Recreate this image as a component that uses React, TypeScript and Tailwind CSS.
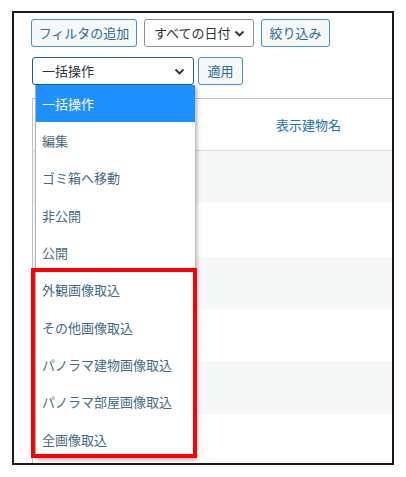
import React from "react";

const items = [
  "一括操作",
  "編集",
  "ゴミ箱へ移動",
  "非公開",
  "公開",
  "外観画像取込",
  "その他画像取込",
  "パノラマ建物画像取込",
  "パノラマ部屋画像取込",
  "全画像取込",
];

const Chevron = ({ className = "" }: { className?: string }) => (
  <svg width="11" height="7" viewBox="0 0 11 7" className={className}>
    <path d="M1.5 1.5 L5.5 5.5 L9.5 1.5" fill="none" stroke="#2c3338" strokeWidth="1.8" />
  </svg>
);

export default function App() {
  const font = { fontFamily: '"Noto Sans CJK JP", "Noto Sans", sans-serif' };
  return (
    <div className="w-[406px] h-[477px] bg-white pt-[11px] pl-[12px]" style={font}>
      <div className="relative w-[382px] h-[454px] border-2 border-[#1a1a1a] overflow-hidden bg-white">
        <div className="pl-[17px] pt-[6px]">
          {/* filter row */}
          <div className="flex gap-[7px]">
            <div className="w-[106px] h-[28px] flex items-center justify-center rounded-[3px] border border-[#4a8fbd] bg-[#f6f7f7] text-[13px] text-[#2a6c98]">
              フィルタの追加
            </div>
            <div className="w-[110px] h-[28px] flex items-center justify-between pl-[9px] pr-[8px] rounded-[3px] border border-[#8c8f94] bg-white text-[13px] text-[#2c3338]">
              <span>すべての日付</span>
              <Chevron />
            </div>
            <div className="w-[69px] h-[28px] flex items-center justify-center rounded-[3px] border border-[#4a8fbd] bg-[#f6f7f7] text-[13px] text-[#2a6c98]">
              絞り込み
            </div>
          </div>
          {/* bulk actions row */}
          <div className="flex gap-[4px] mt-[10px] ml-[1px]">
            <div className="w-[162px] h-[28px] flex items-center justify-between pl-[9px] pr-[8px] rounded-[3px] border border-[#1d5f8e] bg-white text-[13px] text-[#2c3338]">
              <span>一括操作</span>
              <Chevron />
            </div>
            <div className="w-[45px] h-[28px] flex items-center justify-center rounded-[3px] border border-[#4a8fbd] bg-[#f6f7f7] text-[13px] text-[#2a6c98]">
              適用
            </div>
          </div>
          {/* table */}
          <div className="mt-[13px] ml-[1px] w-[420px] border-l border-t border-[#c3c4c7]">
            <div className="h-[52px] flex items-center pl-[243px] border-b border-[#dcdcde] text-[13px] text-[#2271b1]">
              表示建物名
            </div>
            <div className="h-[52px] bg-[#f6f7f7]" />
            <div className="h-[54px] bg-white" />
            <div className="h-[52px] bg-[#f6f7f7]" />
            <div className="h-[52px] bg-white" />
            <div className="h-[53px] bg-[#f6f7f7]" />
            <div className="h-[52px] bg-white" />
          </div>
        </div>

        {/* open dropdown list */}
        <div className="absolute left-[21px] top-[72px] w-[160px] bg-white shadow-[2px_2px_4px_rgba(0,0,0,0.3)] border-l border-[#b0b0b0]">
          {items.map((t, i) => (
            <div
              key={t}
              className={`h-[37.3px] flex items-center pl-[6px] text-[13px] ${
                i === 0 ? "bg-[#1e90ff] text-white" : "text-[#456b82]"
              }`}
            >
              {t}
            </div>
          ))}
        </div>

        {/* highlight annotation */}
        <div className="absolute left-[17px] top-[255px] w-[166px] h-[190px] border-4 border-[#ff0000]" />
      </div>
    </div>
  );
}
